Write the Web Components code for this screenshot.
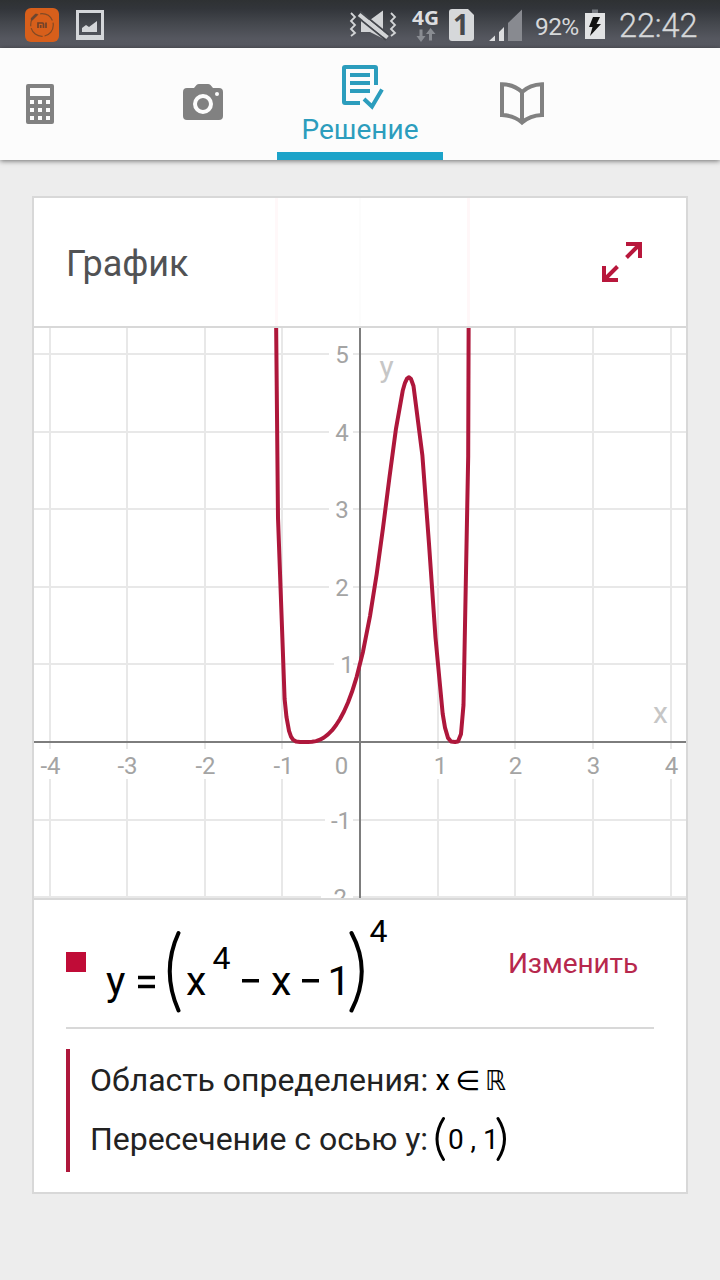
<!DOCTYPE html>
<html lang="ru">
<head>
<meta charset="utf-8">
<title>График</title>
<style>
html,body{margin:0;height:100%}
body{background:#ededed;font-family:Roboto,"Noto Sans",sans-serif;overflow:hidden}
</style>
</head>
<body>
<solver-app></solver-app>
<script>
function define(name, html, init) {
  const template = document.createElement('template');
  template.innerHTML = html;
  customElements.define(name, class extends HTMLElement {
    constructor() {
      super();
      this.attachShadow({mode: 'open'}).append(template.content.cloneNode(true));
      if (init) init(this.shadowRoot);
    }
  });
}

define('status-bar', `
<style>
:host{display:flex;height:48px;background:linear-gradient(#2e3133 0,#32353a 18%,#45484e 50%,#55575f 80%,#595b63 100%);color:#d6d8da}
svg{display:block;flex:none}
.space{flex:1}
.pct{width:47px;padding-left:2px;font-size:24.5px;line-height:53px;letter-spacing:-.6px;white-space:nowrap;flex:none}
.time{width:101px;font-size:32.5px;line-height:52px;font-weight:300;letter-spacing:-.1px;flex:none;-webkit-text-stroke:.3px}
</style>
<svg width="64" height="48" viewBox="0 0 64 48"><rect x="25" y="8" width="34" height="34" rx="6" fill="#d75f1b"/><circle cx="42" cy="25" r="11.3" fill="none" stroke="#824a25" stroke-width="1.2" stroke-dasharray="15 2"/><path d="M32 19l4-4" stroke="#6c4630" stroke-width="2.6" stroke-linecap="round"/><path d="M38 28v-5h4.500q1 0 1 1v4M40.700 28v-3M46 22.500V28" fill="none" stroke="#704229" stroke-width="1.700"/></svg>
<svg width="50" height="48" viewBox="64 0 50 48"><path fill="#d4d6d9" fill-rule="evenodd" d="M76 10h28v30H76zM79 13v22h22V13z"/><path fill="#d4d6d9" d="M82 32v-4l4-3 3 2 8-6v11z"/></svg>
<span class="space"></span>
<svg width="60" height="48" viewBox="345 0 60 48"><g fill="none" stroke="#d2d4d6" stroke-width="1.800"><path d="M351 13l4 4-4 4 4 4-4 4 4 4-4 3"/><path d="M391 13l4 4-4 4 4 4-4 4 4 4-4 3"/></g><path fill="#d2d4d6" d="M361 20h9l13-9.500V38.500L370 32h-9z"/><path d="M358 17.500L386 40" stroke="#44474d" stroke-width="2"/><path d="M360 11.500L389 35" stroke="#44474d" stroke-width="2"/><path d="M359 14.500L387.500 37.500" stroke="#d2d4d6" stroke-width="4"/></svg>
<svg width="38" height="48" viewBox="405 0 38 48"><text x="412" y="24.500" font-family="Open Sans" font-size="20" font-weight="700" fill="#dcdddf" textLength="27" lengthAdjust="spacingAndGlyphs">4G</text><path fill="#898c92" d="M419.500 29.500h3V36h3l-4.500 6-4.500-6h3zM429 40.500h3V34h3.500l-5-6-4.500 6h3z"/></svg>
<svg width="40" height="48" viewBox="443 0 40 48"><path fill="#d6d8da" d="M452 9h16l6 6v23q0 3-3 3h-19q-3 0-3-3V12q0-3 3-3z"/><text x="461" y="35" text-anchor="middle" font-family="Open Sans" font-size="28" font-weight="700" fill="#45484d">1</text></svg>
<svg width="50" height="48" viewBox="483 0 50 48"><path fill="#dcdddf" d="M489 41l6-5.500V41zM499 32l5-5v14h-5z"/><path fill="#888a90" d="M508 23l14-13.500V41h-14z"/></svg>
<span class="pct">92%</span>
<svg width="37" height="48" viewBox="582 0 37 48"><path fill="#777a80" d="M592 9.500h6V13h-6z"/><path fill="#e2e3e4" d="M585 13h20v26h-20z"/><path fill="#111" d="M593 17h7l-3.500 7h4.500L590 36l2.500-9H589z"/></svg>
<span class="time">22:42</span>`);

define('tab-bar', `
<style>
:host{display:grid;grid-template-columns:129px 148px 166px 158px;height:112px;background:#fcfcfc;box-shadow:0 1px 5px #0008;position:relative}
::slotted(*){min-width:0}
</style><slot></slot>`);

define('tab-item', `
<style>
:host{display:flex;align-items:flex-start;justify-content:center;color:#818181;box-sizing:border-box}
:host([first]){padding-right:49px}
</style><slot></slot>`);

define('tab-active', `
<style>
:host{display:flex;flex-direction:column;align-items:center;height:112px;box-sizing:border-box;border-bottom:8px solid #1ca3c9;color:#2c9dbd;padding-top:14px}
svg{display:block}
span{font-size:28px;line-height:34px;margin-top:3px;letter-spacing:0}
</style>
<svg width="48" height="48" viewBox="336 62 48 48" fill="none" stroke="currentColor" stroke-width="4"><path d="M360 103H345q-1 0-1-1V68q0-1 1-1h30q1 0 1 1V85M350 75h20M350 83h20M350 91h20M364 99l8 7.500 10-17"/></svg>
<span><slot></slot></span>`);

define('icon-calc', `<style>:host{display:block;padding-top:36px}svg{display:block}</style>
<svg width="28" height="40" viewBox="0 0 28 40"><path fill="currentColor" fill-rule="evenodd" d="M2 0h24q2 0 2 2v36q0 2-2 2H2q-2 0-2-2V2q0-2 2-2zM4 4v8h20V4zM4 16v4h4v-4zM12 16v4h4v-4zM20 16v4h4v-4zM4 24v4h4v-4zM12 24v4h4v-4zM20 24v4h4v-4zM4 32v4h4v-4zM12 32v4h4v-4zM20 32v4h4v-4z"/></svg>`);

define('icon-camera', `<style>:host{display:block;padding-top:36px}svg{display:block}</style>
<svg width="40" height="36" viewBox="0 0 40 36"><path fill="currentColor" d="M4 4h7l2.500-3Q14.500 0 16 0h9q1.500 0 2.500 1L30 4h6q4 0 4 4v24q0 4-4 4H4q-4 0-4-4V8q0-4 4-4z"/><circle cx="20" cy="20" r="8" fill="none" stroke="#fcfcfc" stroke-width="4"/><circle cx="34" cy="10" r="2" fill="#fcfcfc"/></svg>`);

define('icon-book', `<style>:host{display:block;padding-top:32px}svg{display:block}</style>
<svg width="44" height="48" viewBox="500 80 44 48"><path fill="none" stroke="currentColor" stroke-width="4" d="M502 84.200Q514 84.500 522 92Q530 84.500 542 84.200V115Q530 115.500 522 122.500Q514 115.500 502 115zM522 91v31"/></svg>`);

define('graph-card', `
<style>
:host{display:flex;flex-direction:column;box-sizing:border-box;width:656px;height:998px;margin:36px 0 0 32px;background:#fff;border:2px solid #d8d8d8}
header{display:flex;justify-content:space-between;align-items:center;height:128px;box-sizing:border-box;padding:0 44px 0 32px;color:#515254;
background:linear-gradient(#fff8f9,#fff8f9) 241px 0/3px 100% no-repeat,linear-gradient(#fff7f8,#fff7f8) 433px 0/3px 100% no-repeat,linear-gradient(#fcfcfc,#fcfcfc) 325px 0/2px 100% no-repeat}
h1{font:400 36px/42px Roboto,sans-serif;margin:3px 0 0}
svg{display:block}
</style>
<header><h1>График</h1>
<svg width="40" height="40" viewBox="602 242 40 40" fill="none" stroke="#b8173c" stroke-width="4"><path d="M626 244h14v14M626.500 257.500L640 244M604 266v14h14M604 280l13.500-13.500"/></svg></header>
<slot></slot>`);

define('function-plot', `
<style>
:host{display:block;height:570px;border-top:2px solid #d8d8d8;border-bottom:2px solid #d8d8d8}
svg{display:block}
text{font:24px Roboto,sans-serif;fill:#a4a4a4}
text.name{font-size:30px;fill:#c6c6c6}
</style>
<svg width="652" height="570" viewBox="34 328 652 570"></svg>`, root => {
  const svg = root.querySelector('svg');
  const X0 = 360, Y0 = 742, UNIT = 77.6;
  const columns = {'-4': 50, '-3': 127, '-2': 205, '-1': 282, 1: 438, 2: 515, 3: 593, 4: 671};
  const rows = {5: 354, 4: 432, 3: 509, 2: 587, 1: 664, '-1': 820, '-2': 897};
  const parts = [];
  const rect = (x, y, w, h, fill) => parts.push(`<rect x="${x}" y="${y}" width="${w}" height="${h}" fill="${fill}"/>`);
  const text = (x, y, s, cls = '') => parts.push(`<text class="${cls}" x="${x}" y="${y}" text-anchor="middle">${s}</text>`);
  for (const n in rows) rect(34, rows[n] - 1, 652, 2, '#e8e8e8');
  for (const n in columns) rect(columns[n] - 1, 328, 2, 568, '#e8e8e8');
  for (const n in columns) rect(columns[n] - 12, 749, 24, 30, '#fff');
  for (const n in rows) {
    const left = {1: 334, '-1': 325, '-2': 321}[n] || 329;
    rect(left, rows[n] - 12, 353 - left, 24, '#fff');
  }
  for (const n in columns) text(columns[n] + (n === '1' ? 2.5 : n === '-1' ? 1.500 : 0.5), 773.5, n);
  for (const n in rows) text({1: 347, '-1': 341, '-2': 337}[n] || 342, rows[n] + 9, n);
  text(341.500, 773.5, '0');
  rect(34, 741, 652, 2, '#7d7d7d');
  rect(359, 328, 2, 570, '#7d7d7d');
  text(386.500, 377, 'y', 'name');
  text(660.500, 723, 'x', 'name');
  const xs = [271.2, 278, 284.6, 286.5, 289, 291, 293, 296, 300];
  for (let x = 304; x < 356; x += 4) xs.push(x);
  xs.push(356.7, 363, 370, 376.7, 383, 389.5, 396, 402.7, 405, 407, 409, 411, 413.5, 422.4, 429, 435.5, 442.7, 445, 448, 451, 455, 458, 461, 463.5, 468.2, 475);
  const points = xs.map(px => {
    const x = (px - X0) / UNIT;
    return px + ',' + (Y0 - UNIT * (x ** 4 - x - 1) ** 4).toFixed(1);
  });
  parts.push(`<polyline points="${points.join(' ')}" fill="none" stroke="#ae173b" stroke-width="4" stroke-linejoin="round"/>`);
  svg.innerHTML = parts.join('');
});

define('function-row', `
<style>
:host{display:flex;justify-content:space-between;height:127px;margin:0 32px;border-bottom:2px solid #d8d8d8;color:#000}
.mark{width:20px;height:20px;margin-top:52px;background:#c00c37;flex:none}
svg{display:block;flex:none;margin-left:10px;margin-right:auto}
.edit{font-size:28px;line-height:34px;margin:47px 16px 0 0;color:#b7284d;letter-spacing:-.1px}
text{font-family:Roboto,sans-serif;font-size:41px}
text.sup{font-size:32px}
</style>
<span class="mark"></span>
<svg width="310" height="126" viewBox="96 900 310 126"><text x="106" y="995">y</text><path d="M138 977.500h17M138 986.500h17M242 980.800h17M302 980.800h17" stroke="#000" stroke-width="3.600"/><path d="M178.500 933Q161 971 178.500 1010.500M351.500 933Q372 971 351.500 1010.500" fill="none" stroke="#000" stroke-width="4" stroke-linecap="round"/><text x="186" y="995">x</text><text class="sup" x="212.500" y="969">4</text><text x="271" y="995">x</text><text x="327.500" y="995">1</text><text class="sup" x="369.500" y="942">4</text></svg>
<span class="edit">Изменить</span>`);

define('property-list', `
<style>
:host{display:block;margin:20px 32px 0;height:123px;box-sizing:border-box;border-left:4px solid #ae173b;padding:2px 0 0 20px;font-size:32px;color:#222}
</style><slot></slot>`);

define('property-row', `
<style>
:host{display:flex;height:59px;line-height:59px;white-space:nowrap}
.label{width:338px;flex:none;letter-spacing:-.03px}
</style><span class="label"><slot></slot></span><slot name="value"></slot>`);

define('math-domain', `
<style>:host{display:block}svg{display:block}text{font-family:Roboto,sans-serif;font-size:29px}text.sym{font-family:"DejaVu Sans",sans-serif;font-size:27px}</style>
<svg width="90" height="59" viewBox="428 1051 90 59"><text x="435.500" y="1090">x</text><text class="sym" x="455.500" y="1090" textLength="25" lengthAdjust="spacingAndGlyphs">∈</text><text class="sym" x="485" y="1090" textLength="21" lengthAdjust="spacingAndGlyphs">ℝ</text></svg>`);

define('math-point', `
<style>:host{display:block}svg{display:block}text{font-family:Roboto,sans-serif;font-size:28px}</style>
<svg width="90" height="59" viewBox="428 1110 90 59"><path d="M443.500 1118.500Q430.500 1139 443.500 1159.500M498 1118.500Q511 1139 498 1159.500" fill="none" stroke="#000" stroke-width="3" stroke-linecap="round"/><text x="448" y="1149">0</text><text x="470.500" y="1149">,</text><text x="483" y="1149">1</text></svg>`);

define('solver-app', `
<style>:host{display:flex;flex-direction:column;width:720px;height:1280px;background:#ededed;overflow:hidden}</style>
<status-bar></status-bar>
<tab-bar>
  <tab-item first><icon-calc></icon-calc></tab-item>
  <tab-item><icon-camera></icon-camera></tab-item>
  <tab-active>Решение</tab-active>
  <tab-item><icon-book></icon-book></tab-item>
</tab-bar>
<graph-card>
  <function-plot></function-plot>
  <function-row></function-row>
  <property-list>
    <property-row>Область определения:<math-domain slot="value"></math-domain></property-row>
    <property-row>Пересечение с осью y:<math-point slot="value"></math-point></property-row>
  </property-list>
</graph-card>`);
</script>
</body>
</html>
